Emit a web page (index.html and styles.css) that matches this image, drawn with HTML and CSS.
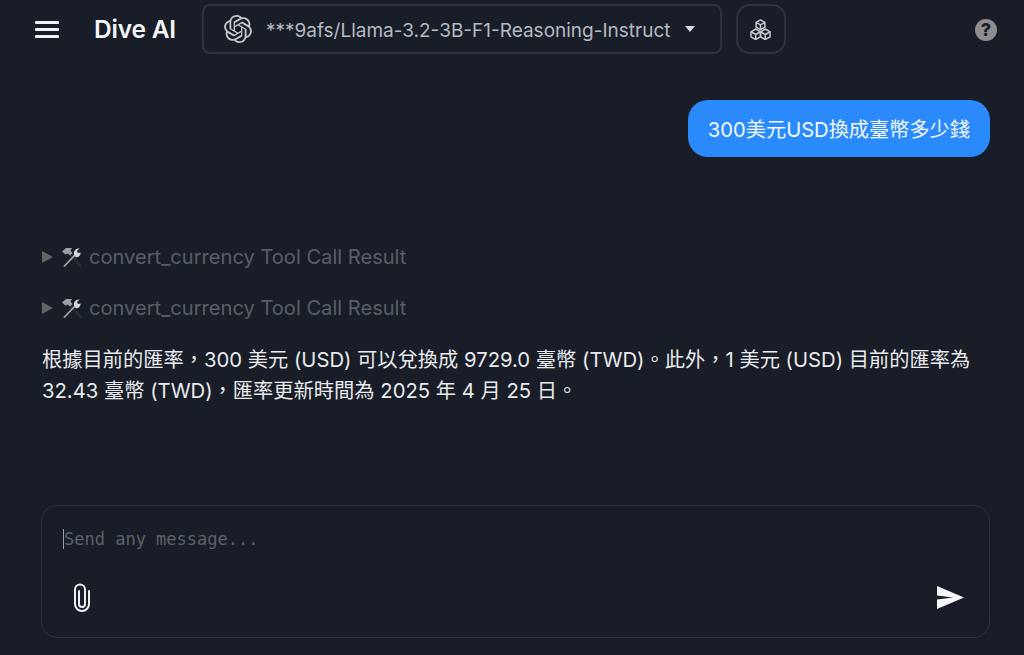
FILE: index.html
```html
<!DOCTYPE html>
<html lang="zh-Hant">
<head>
<meta charset="utf-8">
<title>Dive AI</title>
<link rel="stylesheet" href="styles.css">
</head>
<body>
<div class="app">
  <header class="header">
    <button class="menu" aria-label="menu"><span></span><span></span><span></span></button>
    <h1 class="brand">Dive AI</h1>
    <div class="model">
      <svg class="openai" viewBox="0 0 24 24" fill="currentColor"><path d="M22.2819 9.8211a5.9847 5.9847 0 0 0-.5157-4.9108 6.0462 6.0462 0 0 0-6.5098-2.9A6.0651 6.0651 0 0 0 4.9807 4.1818a5.9847 5.9847 0 0 0-3.9977 2.9 6.0462 6.0462 0 0 0 .7427 7.0966 5.98 5.98 0 0 0 .511 4.9107 6.051 6.051 0 0 0 6.5146 2.9001A5.9847 5.9847 0 0 0 13.2599 24a6.0557 6.0557 0 0 0 5.7718-4.2058 5.9894 5.9894 0 0 0 3.9977-2.9001 6.0557 6.0557 0 0 0-.7475-7.0729zm-9.022 12.6081a4.4755 4.4755 0 0 1-2.8764-1.0408l.1419-.0804 4.7783-2.7582a.7948.7948 0 0 0 .3927-.6813v-6.7369l2.02 1.1686a.071.071 0 0 1 .038.052v5.5826a4.504 4.504 0 0 1-4.4945 4.4944zm-9.6607-4.1254a4.4708 4.4708 0 0 1-.5346-3.0137l.142.0852 4.783 2.7582a.7712.7712 0 0 0 .7806 0l5.8428-3.3685v2.3324a.0804.0804 0 0 1-.0332.0615L9.74 19.9502a4.4992 4.4992 0 0 1-6.1408-1.6464zM2.3408 7.8956a4.485 4.485 0 0 1 2.3655-1.9728V11.6a.7664.7664 0 0 0 .3879.6765l5.8144 3.3543-2.0201 1.1685a.0757.0757 0 0 1-.071 0l-4.8303-2.7865A4.504 4.504 0 0 1 2.3408 7.872zm16.5963 3.8558L13.1038 8.364 15.1192 7.2a.0757.0757 0 0 1 .071 0l4.8303 2.7913a4.4944 4.4944 0 0 1-.6765 8.1042v-5.6772a.79.79 0 0 0-.407-.667zm2.0107-3.0231l-.142-.0852-4.7735-2.7818a.7759.7759 0 0 0-.7854 0L9.409 9.2297V6.8974a.0662.0662 0 0 1 .0284-.0615l4.8303-2.7866a4.4992 4.4992 0 0 1 6.6802 4.66zM8.3065 12.863l-2.02-1.1638a.0804.0804 0 0 1-.038-.0567V6.0742a4.4992 4.4992 0 0 1 7.3757-3.4537l-.142.0805L8.704 5.459a.7948.7948 0 0 0-.3927.6813zm1.0976-2.3654l2.602-1.4998 2.6069 1.4998v2.9994l-2.5974 1.4997-2.6067-1.4997Z"/></svg>
      <span class="model-name">***9afs/Llama-3.2-3B-F1-Reasoning-Instruct</span>
      <span class="caret"></span>
    </div>
    <button class="tools" aria-label="tools">
      <svg viewBox="0 0 24 22" fill="none" stroke="currentColor" stroke-width="1.6" stroke-linejoin="round"><path d="M12 1l4.600 2.600v5L12 11.200 7.400 8.600v-5z"/><path d="M7.400 3.600L12 6.200l4.600-2.600M12 6.200v5"/><path d="M7 10.500l5 2.900v5.300L7 21.500 2 18.700v-5.300z"/><path d="M2 13.400l5 2.800 5-2.800M7 16.200v5.300"/><path d="M17 10.500l5 2.900v5.300l-5 2.800-5-2.800v-5.300z"/><path d="M12 13.400l5 2.800 5-2.800M17 16.200v5.300"/></svg>
    </button>
    <button class="help" aria-label="help">?</button>
  </header>

  <main class="chat">
    <div class="user-row"><div class="bubble">300美元USD換成臺幣多少錢</div></div>
    <div class="tool-list">
      <div class="tool-row"><span class="tri"></span><svg class="emoji" viewBox="0 0 20 20"><path d="M6 5l12.500 14" stroke="#2a2c31" stroke-width="2.600" stroke-linecap="round"/><path d="M14 7L2.500 19" stroke="#a3a6ac" stroke-width="1.800" stroke-linecap="round"/><path d="M0 4.500L4 1h6L8.500 3.500l2 2.500-2.500 2.500-2-2-2.500 1z" fill="#9c9fa5"/><path d="M12 7.500c-.8-3 1.500-6.500 5.500-6l-2.500 2.500 1 2 2.500-.5c.5 3-2.500 5.500-5 4.500z" fill="#d2d4d8"/></svg><span>convert_currency Tool Call Result</span></div>
      <div class="tool-row"><span class="tri"></span><svg class="emoji" viewBox="0 0 20 20"><path d="M6 5l12.500 14" stroke="#2a2c31" stroke-width="2.600" stroke-linecap="round"/><path d="M14 7L2.500 19" stroke="#a3a6ac" stroke-width="1.800" stroke-linecap="round"/><path d="M0 4.500L4 1h6L8.500 3.500l2 2.500-2.500 2.500-2-2-2.500 1z" fill="#9c9fa5"/><path d="M12 7.500c-.8-3 1.500-6.500 5.500-6l-2.500 2.500 1 2 2.500-.5c.5 3-2.500 5.500-5 4.500z" fill="#d2d4d8"/></svg><span>convert_currency Tool Call Result</span></div>
    </div>
    <p class="answer">根據目前的匯率，300 美元 (USD) 可以兌換成 9729.0 臺幣 (TWD)。此外，1 美元 (USD) 目前的匯率為 32.43 臺幣 (TWD)，匯率更新時間為 2025 年 4 月 25 日。</p>
  </main>

  <section class="composer">
    <div class="input"><span class="cursor"></span><span class="placeholder">Send any message...</span></div>
    <div class="actions">
      <svg class="clip" viewBox="0 0 16 29" fill="none" stroke="currentColor" stroke-width="2" stroke-linecap="round"><path d="M15 8v13a7 7 0 0 1-14 0V6.500a5 5 0 0 1 10 0V21a3 3 0 0 1-6 0V8"/></svg>
      <svg class="send" viewBox="0 0 27 23" fill="currentColor"><path d="M0 0l27 11.500L0 23v-9.500L16 11.500 0 9.500z"/></svg>
    </div>
  </section>
</div>
</body>
</html>
```

FILE: styles.css
```css
* { box-sizing: border-box; }
html, body { margin: 0; height: 100%; }
body {
  background: #181d27;
  color: #e8eaed;
  font-family: Inter, "Noto Sans CJK TC", sans-serif;
  overflow: hidden;
}
button { background: none; border: 0; padding: 0; color: inherit; font: inherit; }
.app { height: 655px; display: flex; flex-direction: column; }

.header {
  height: 60px;
  flex: none;
  display: flex;
  align-items: center;
  padding: 0 27px 2px 35px;
}
.menu { width: 24px; display: flex; flex-direction: column; gap: 4px; margin-right: 35px; }
.menu span { display: block; height: 3px; background: #f2f3f5; border-radius: 1px; }
.brand { margin: 0 26px 0 0; font-size: 24.500px; font-weight: 600; color: #f4f5f7; line-height: 1; letter-spacing: -0.2px; }
.model {
  width: 520px;
  height: 50px;
  border: 2px solid #2d323d;
  border-radius: 8px;
  display: flex;
  align-items: center;
  padding-left: 20px;
  margin-right: 14px;
}
.openai { width: 28px; height: 28px; color: #c4c6cb; margin-right: 14px; flex: none; }
.model-name { font-size: 19px; white-space: nowrap; color: #b6bac2; padding-top: 2px; }
.caret { width: 0; height: 0; border: 5px solid transparent; border-top: 6px solid #d8dade; border-bottom: 0; margin-left: 14px; }
.tools {
  width: 50px;
  height: 50px;
  border: 2px solid #2d323d;
  border-radius: 14px;
  display: flex;
  align-items: center;
  justify-content: center;
  color: #c6c8cc;
}
.tools svg { width: 23px; height: 21px; }
.help {
  margin: 2px 0 0 auto;
  width: 22px;
  height: 22px;
  border-radius: 50%;
  background: #8e8e90;
  color: #181d27;
  font-size: 18px;
  font-weight: 800;
  line-height: 22px;
  text-align: center;
}

.chat { flex: 1; min-height: 0; padding: 40px 34px 0 42px; font-size: 20.200px; }
.user-row { display: flex; justify-content: flex-end; }
.bubble {
  background: #2a8afb;
  color: #f4f8ff;
  height: 57px;
  padding: 0 20px;
  border-radius: 20px;
  display: flex;
  align-items: center;
  white-space: nowrap;
}
.tool-list { margin-top: 87px; display: flex; flex-direction: column; gap: 25px; font-size: 20.100px; }
.tool-row { display: flex; align-items: center; height: 26px; color: #5a5e66; white-space: nowrap; }
.tri { width: 0; height: 0; border: 6.500px solid transparent; border-left: 11px solid #62655f; border-right: 0; margin-right: 9px; }
.emoji { width: 20px; height: 20px; margin-right: 7px; flex: none; }
.answer { margin: 23px 0 0; line-height: 31px; color: #e8eaed; font-size: 20.250px; }

.composer {
  flex: none;
  margin: 0 34px 17px 41px;
  height: 133px;
  border: 1px solid #2d323d;
  border-radius: 16px;
  padding: 20px 20px 0 20px;
  display: flex;
  flex-direction: column;
}
.input { display: flex; height: 26px; align-items: center; padding-left: 1px; }
.cursor { width: 1px; height: 20px; background: #9aa0a8; flex: none; }
.placeholder { font-family: "DejaVu Sans Mono", monospace; font-size: 17px; color: #5e6168; white-space: nowrap; }
.actions { margin-top: 31px; display: flex; align-items: center; justify-content: space-between; padding: 0 5px 0 12px; }
.clip { width: 16px; height: 29px; color: #eef0f2; }
.send { width: 27px; height: 23px; color: #f6f7f8; }
```
